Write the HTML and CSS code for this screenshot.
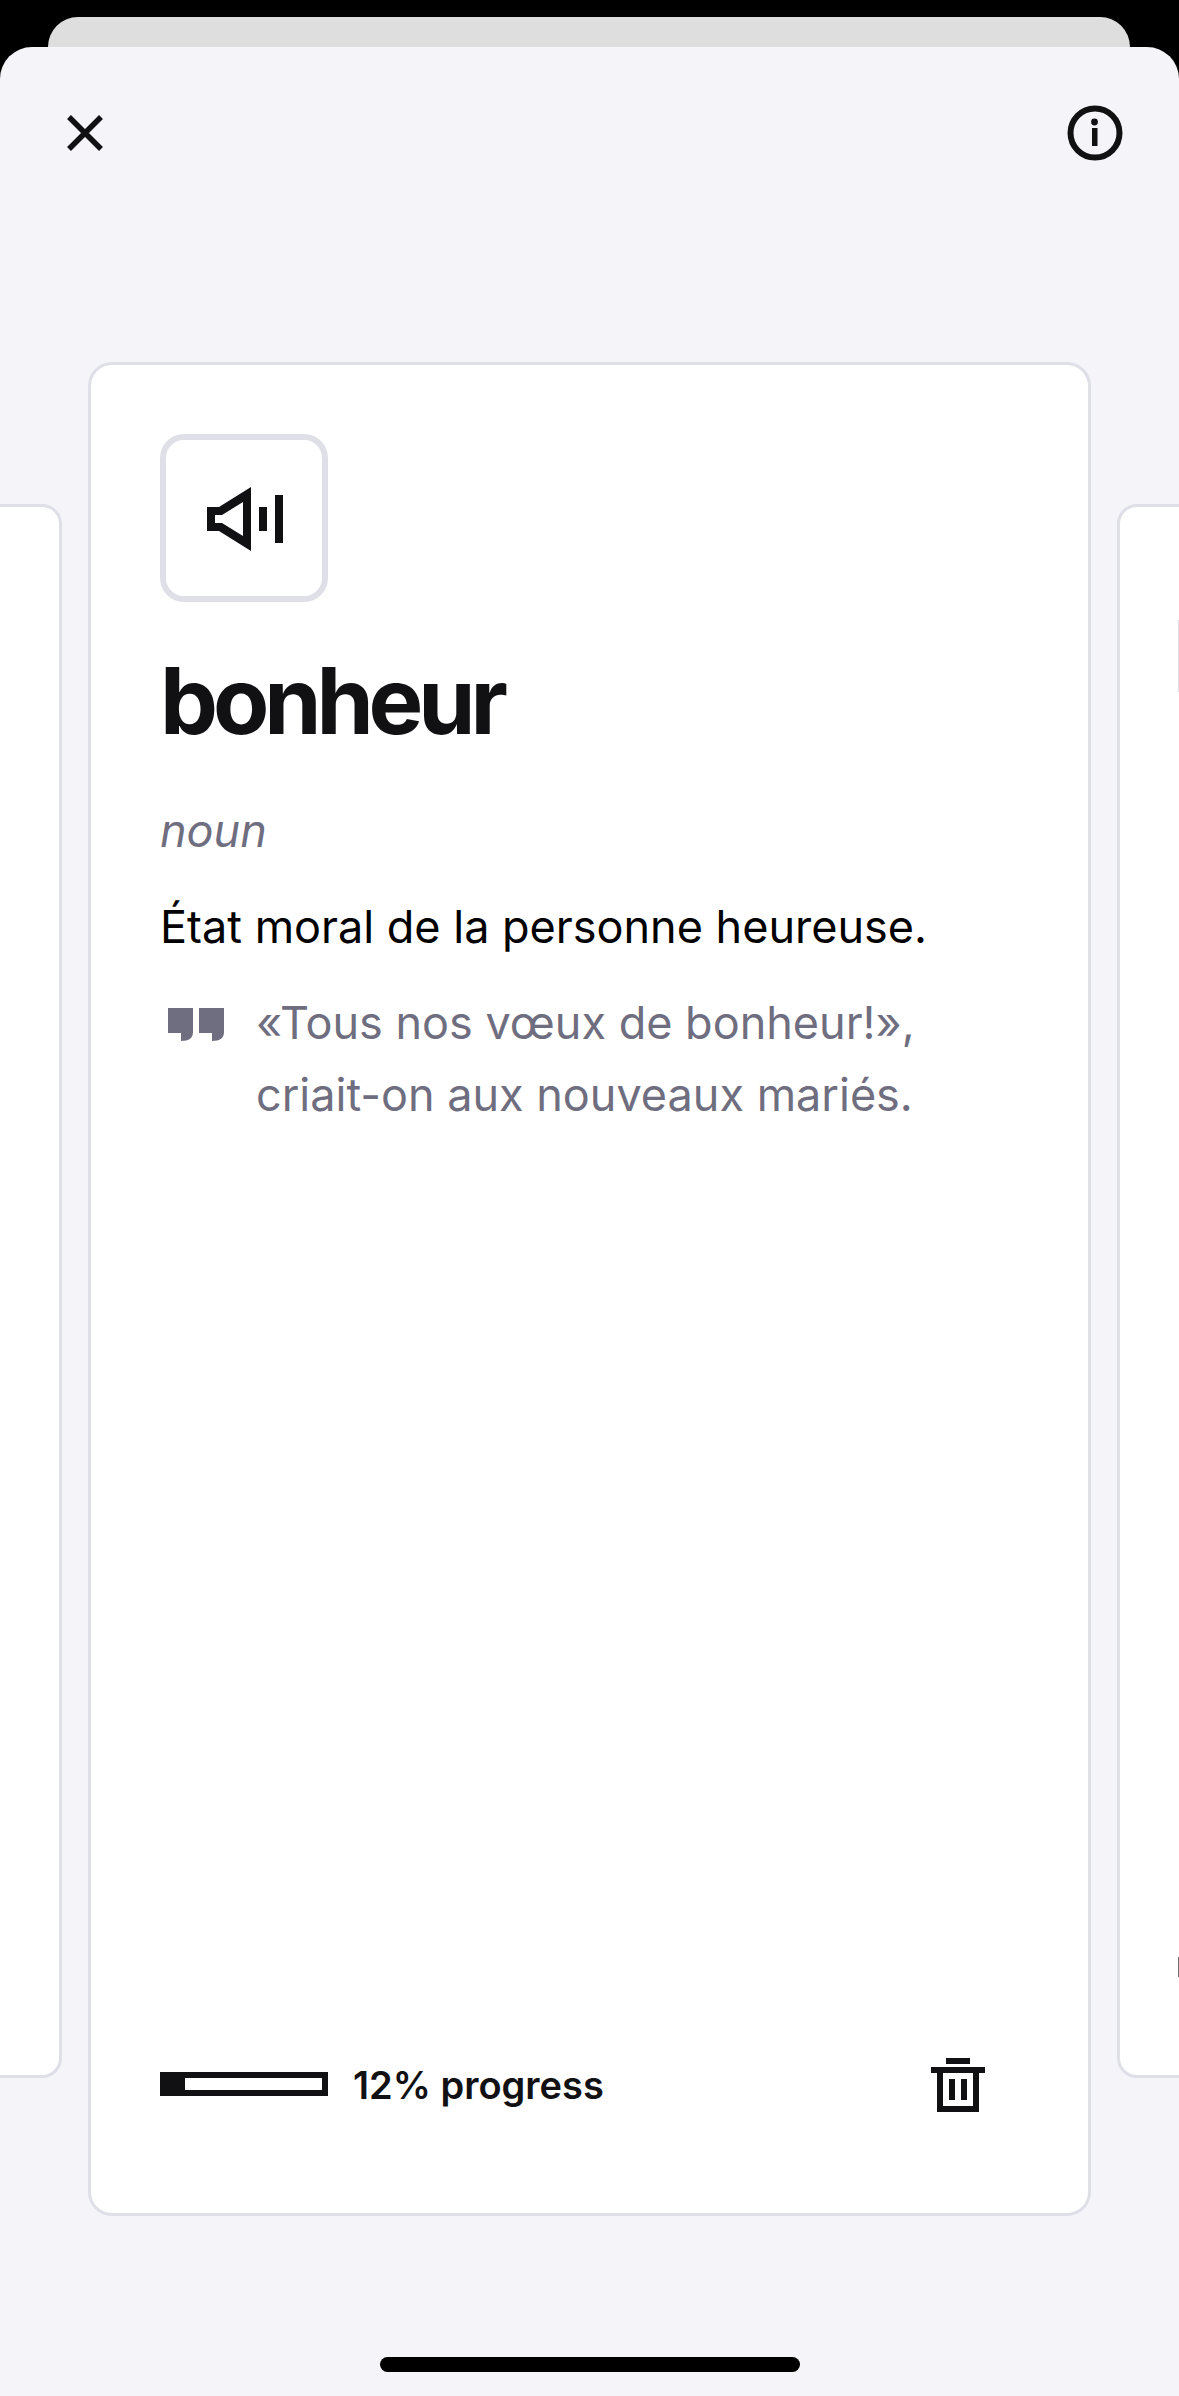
FILE: index.html
```html
<!doctype html>
<html lang="fr">
<head>

<meta charset="utf-8">
<meta name="viewport" content="width=device-width, initial-scale=1">

<title>bonheur</title>

<link rel="stylesheet" href="styles.css">

</head>
<body>

<div class="back-sheet"></div>

<main class="sheet">
	<header class="topbar">
		<button type="button" class="icon-btn" aria-label="Close">
			<svg width="38" height="38" viewBox="0 0 38 38"><path d="M3 3 35 35M35 3 3 35" fill="none" stroke="#111114" stroke-width="5.5"/></svg>
		</button>
		<button type="button" class="icon-btn" aria-label="Info">
			<svg width="56" height="56" viewBox="0 0 56 56"><circle cx="28" cy="28" r="24.5" fill="none" stroke="#111114" stroke-width="6"/><circle cx="27.5" cy="17" r="3.4" fill="#111114"/><rect x="25" y="23" width="5.5" height="18" fill="#111114"/></svg>
		</button>
	</header>

	<div class="deck">
		<div class="side-card side-card--left"></div>

		<article class="card">
			<button type="button" class="audio" aria-label="Play">
				<svg width="76" height="64" viewBox="0 0 76 64"><path d="M0 20H12L44 0V64L12 44H0ZM8 28V36H15L36 49V15L15 28Z" fill="#111114" fill-rule="evenodd"/><rect x="52" y="20" width="8" height="24" fill="#111114"/><rect x="68" y="8" width="8" height="48" fill="#111114"/></svg>
			</button>

			<h1>bonheur</h1>
			<p class="pos">noun</p>
			<p class="definition">État moral de la personne heureuse.</p>

			<div class="example">
				<svg class="quote" width="56" height="33" viewBox="0 0 56 33"><path d="M0 0H25V24C25 30 21 33 13 33V25H0ZM31 0H56V24C56 30 52 33 44 33V25H31Z" fill="#6f6e80"/></svg>
				<p>«Tous nos vœux de bonheur!»,<br>criait-on aux nouveaux mariés.</p>
			</div>

			<footer class="card-foot">
				<div class="progress"><div class="progress-fill" style="width: 12%"></div></div>
				<span class="progress-label">12% progress</span>
				<button type="button" class="icon-btn trash" aria-label="Delete">
					<svg width="54" height="54" viewBox="0 0 54 54"><path d="M15 0H39V6H15ZM0 9H54V15H48V54H6V15H0ZM12 15V48H42V15ZM18 21H24V42H18ZM30 21H36V42H30Z" fill="#111114" fill-rule="evenodd"/></svg>
				</button>
			</footer>
		</article>

		<div class="side-card side-card--right">
			<div class="peek-audio"></div>
			<div class="peek-progress"></div>
		</div>
	</div>

	<div class="home-bar"></div>
</main>

</body>
</html>
```

FILE: styles.css
```css
html, body {
	margin: 0;
	padding: 0;
}

body {
	position: relative;
	height: 2396px;
	overflow: hidden;
	background: #000;
	font-family: 'Inter', sans-serif;
	color: #111114;
}

p, h1 {
	margin: 0;
}

button {
	padding: 0;
	border: 0;
	background: none;
}

svg {
	display: block;
}

.back-sheet {
	position: absolute;
	top: 17px;
	left: 48px;
	right: 49px;
	height: 60px;
	border-radius: 30px 30px 0 0;
	background: #dedede;
}

.sheet {
	position: absolute;
	top: 47px;
	left: 0;
	right: 0;
	bottom: 0;
	border-radius: 32px 32px 0 0;
	background: #f4f4f9;
}

.topbar {
	display: flex;
	justify-content: space-between;
	align-items: center;
	padding: 58px 56px 0 66px;
}

.deck {
	position: absolute;
	top: 315px;
	left: 0;
	right: 0;
}

.card {
	display: flex;
	flex-direction: column;
	box-sizing: border-box;
	width: 1003px;
	height: 1854px;
	margin-left: 88px;
	padding: 69px 69px 0;
	border: 3px solid #dfdfe8;
	border-radius: 24px;
	background: #fff;
}

.side-card {
	position: absolute;
	top: 142px;
	display: flex;
	flex-direction: column;
	width: 100px;
	height: 1574px;
	box-sizing: border-box;
	border: 3px solid #dfdfe8;
	border-radius: 20px;
	background: #fff;
}
.side-card--left {
	left: -38px;
}
.side-card--right {
	left: 1117px;
	padding: 113px 0 98px 58px;
}

.peek-audio {
	width: 12px;
	height: 72px;
	background: #dfdfe8;
}

.peek-progress {
	width: 12px;
	height: 20px;
	margin-top: auto;
	background: #6f6f6f;
}

.audio {
	display: flex;
	align-items: center;
	justify-content: center;
	box-sizing: border-box;
	flex: none;
	width: 168px;
	height: 168px;
	padding: 2px 0 0 2px;
	border: 6px solid #dfdfe8;
	border-radius: 24px;
	background: #fff;
}

h1 {
	margin-top: 43px;
	font-size: 92px;
	line-height: 112px;
	font-weight: 700;
	letter-spacing: -5.1px;
}

.pos {
	margin-top: 46px;
	font-size: 45px;
	line-height: 56px;
	font-style: italic;
	color: #6f6e80;
}

.definition {
	margin-top: 40px;
	font-size: 45px;
	line-height: 56px;
	color: #000;
}

.example {
	display: flex;
	margin-top: 32px;
	font-size: 45px;
	line-height: 72px;
	color: #6f6e80;
}

.quote {
	flex: none;
	margin: 21px 32px 0 8px;
}

.card-foot {
	display: flex;
	align-items: center;
	margin-top: auto;
	margin-bottom: 101px;
}

.progress {
	box-sizing: border-box;
	width: 168px;
	height: 24px;
	margin-bottom: 2px;
	border: 6px solid #111114;
	background: #fff;
}

.progress-fill {
	height: 100%;
	background: #111114;
}

.progress-label {
	margin-left: 25px;
	font-size: 38px;
	font-weight: 600;
}

.trash {
	margin-left: auto;
	margin-right: 34px;
}

.home-bar {
	position: absolute;
	left: 380px;
	bottom: 24px;
	width: 420px;
	height: 15px;
	border-radius: 8px;
	background: #000;
}
```
